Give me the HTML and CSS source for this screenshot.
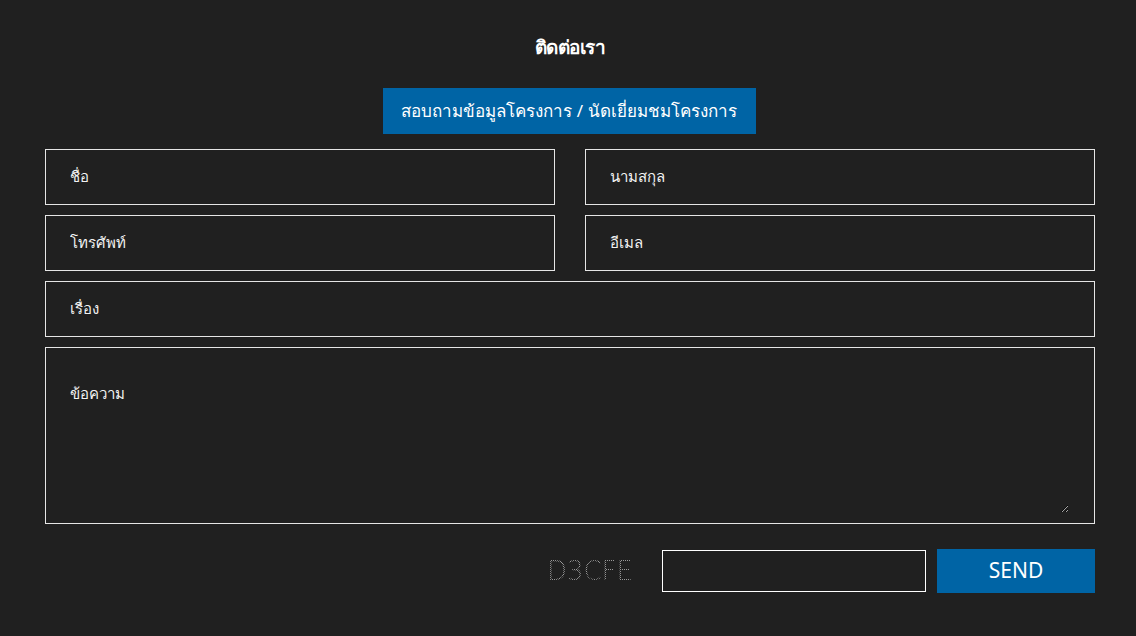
FILE: index.html
```html
<!DOCTYPE html>
<html lang="th">
<head>
    <meta charset="UTF-8">
    <meta name="viewport" content="width=device-width, initial-scale=1.0">
    <title>ติดต่อเรา</title>
    <link rel="stylesheet" href="styles.css">
</head>
<body>
    <div class="contact">
        <h2 class="contact-title">ติดต่อเรา</h2>
        <div class="contact-tab">
            <span>สอบถามข้อมูลโครงการ / นัดเยี่ยมชมโครงการ</span>
        </div>

        <form class="contact-form" onsubmit="return false">
            <div class="form-row">
                <input type="text" placeholder="ชื่อ">
                <input type="text" placeholder="นามสกุล">
            </div>
            <div class="form-row">
                <input type="text" placeholder="โทรศัพท์">
                <input type="text" placeholder="อีเมล">
            </div>
            <input type="text" class="full" placeholder="เรื่อง">
            <div class="textarea-wrap">
                <textarea placeholder="ข้อความ"></textarea>
            </div>

            <div class="form-footer">
                <span class="captcha">D3CFE</span>
                <input type="text" class="captcha-input">
                <button type="submit" class="send-btn">SEND</button>
            </div>
        </form>
    </div>
</body>
</html>
```

FILE: styles.css
```css
/* Base */
* {
    margin: 0;
    padding: 0;
    box-sizing: border-box;
}

body {
    background-color: #202020;
    color: #fff;
    font-family: "Noto Sans", "DejaVu Sans", sans-serif;
}

.contact {
    width: 1050px;
    margin-left: 45px;
    padding-top: 34px;
}

.contact-title {
    text-align: center;
    font-size: 19px;
    font-weight: 700;
    line-height: 26px;
    letter-spacing: -0.5px;
}

.contact-tab {
    display: flex;
    justify-content: center;
    margin-top: 28px;
    margin-bottom: 15px;
}

.contact-tab span {
    background-color: #0064a5;
    color: #fff;
    font-size: 17px;
    line-height: 46px;
    padding: 0 15px;
    width: 373px;
    text-align: center;
    white-space: nowrap;
    margin-left: -2px;
}

/* Form */
.contact-form {
    display: flex;
    flex-direction: column;
    gap: 10px;
}

.form-row {
    display: grid;
    grid-template-columns: 1fr 1fr;
    gap: 30px;
}

.contact-form input,
.contact-form textarea {
    background-color: transparent;
    border: 1px solid #e6e6e6;
    color: #fff;
    font-family: inherit;
    font-size: 15px;
    outline: none;
}

.contact-form input {
    height: 56px;
    padding: 0 24px 2px;
    width: 100%;
}

.textarea-wrap {
    border: 1px solid #e6e6e6;
    height: 177px;
    padding: 0 25px 10px 0;
    display: flex;
}

.contact-form textarea {
    flex: 1;
    border: none;
    padding: 34px 0 0 24px;
    resize: vertical;
}

.contact-form ::placeholder {
    color: #f2f2f2;
    opacity: 1;
}

.form-footer {
    display: flex;
    justify-content: flex-end;
    align-items: center;
    margin-top: 15px;
}

/* dotted-looking captcha */
.captcha {
    font-family: "DejaVu Sans", sans-serif;
    font-weight: 200;
    font-size: 26px;
    line-height: 32px;
    margin-right: 29px;
    color: transparent;
    background: repeating-conic-gradient(#9a9a9a 0 25%, transparent 0 50%) 0 0 / 2px 2px;
    -webkit-background-clip: text;
    background-clip: text;
}

.contact-form .captcha-input {
    width: 264px;
    height: 42px;
    border-color: #fff;
    padding: 0 10px;
    margin-right: 11px;
}

.send-btn {
    background-color: #0064a5;
    border: none;
    color: #fff;
    width: 158px;
    height: 44px;
    font-family: inherit;
    font-size: 21px;
    padding-bottom: 3px;
    cursor: pointer;
}
```
